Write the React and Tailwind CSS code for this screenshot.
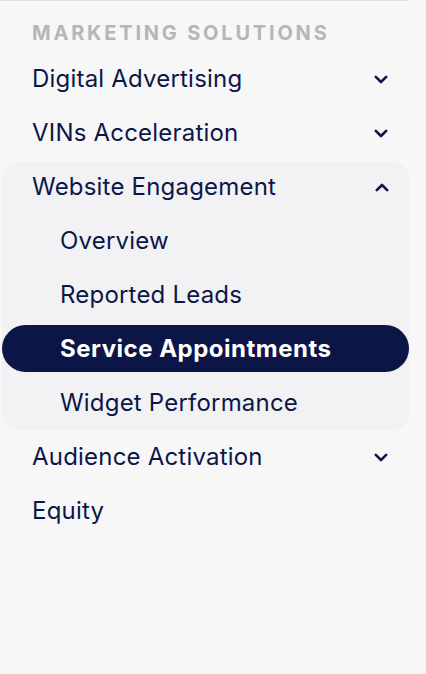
import React from "react";

const Chevron = ({ up }) => (
  <svg width="14" height="9" viewBox="0 0 14 9" fill="none" className={up ? "rotate-180" : ""}>
    <path d="M1.8 1.8 L7 7 L12.2 1.8" stroke="#0c1748" strokeWidth="2.6" strokeLinecap="round" strokeLinejoin="round" />
  </svg>
);

const Row = ({ label, chevron, up }) => (
  <div className="flex h-[54px] items-center justify-between pl-8 pr-[21px]">
    <span className="text-[24px] tracking-[0.2px] text-[#0c1748]">{label}</span>
    {chevron && <Chevron up={up} />}
  </div>
);

const SubRow = ({ label, active }) =>
  active ? (
    <div className="pb-[4px] pt-[3px]">
      <div className="flex h-[47px] items-center rounded-full bg-[#0b1646] pl-[58px]">
        <span className="text-[24px] font-bold tracking-[0.5px] text-white">{label}</span>
      </div>
    </div>
  ) : (
    <div className="flex h-[54px] items-center pl-[58px]">
      <span className="text-[24px] tracking-[0.2px] text-[#0c1748]">{label}</span>
    </div>
  );

export default function App() {
  return (
    <div className="h-[674px] w-full bg-[#f7f7f7]" style={{ fontFamily: "Inter, 'Noto Sans', sans-serif" }}>
      <div className="w-[409px] border-t border-[#dedede]">
        <div className="mb-[7px] mt-5 flex h-6 items-center pl-8 text-[20px] font-bold uppercase tracking-[0.14em] text-[#b6b6b6]">
          Marketing Solutions
        </div>
        <Row label="Digital Advertising" chevron />
        <Row label="VINs Acceleration" chevron />
        <div className="ml-[2px] mt-[2px] rounded-2xl bg-[#f2f2f4]">
          <div className="flex h-[52px] items-center justify-between pb-[2px] pl-[30px] pr-5">
            <span className="text-[24px] tracking-[0.2px] text-[#0c1748]">Website Engagement</span>
            <Chevron up />
          </div>
          <SubRow label="Overview" />
          <SubRow label="Reported Leads" />
          <SubRow label="Service Appointments" active />
          <SubRow label="Widget Performance" />
        </div>
        <Row label="Audience Activation" chevron />
        <Row label="Equity" />
      </div>
    </div>
  );
}
